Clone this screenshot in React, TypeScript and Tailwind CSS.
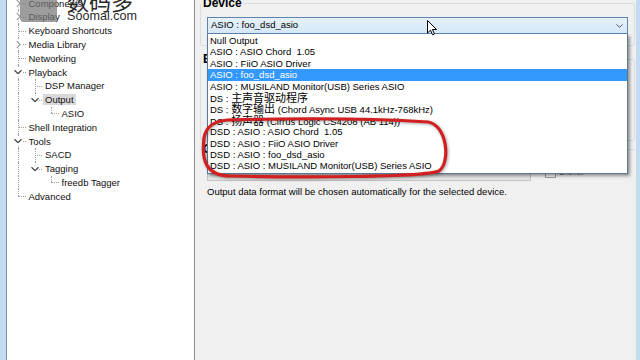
import React from "react";

type TreeNode = {
  label: string;
  level: number;
  exp?: "open" | "closed";
  anc: boolean[];
  last?: boolean;
  sel?: boolean;
};

const tree: TreeNode[] = [
  { label: "Components", level: 0, exp: "closed", anc: [] },
  { label: "Display", level: 0, exp: "closed", anc: [] },
  { label: "Keyboard Shortcuts", level: 0, anc: [] },
  { label: "Media Library", level: 0, exp: "closed", anc: [] },
  { label: "Networking", level: 0, anc: [] },
  { label: "Playback", level: 0, exp: "open", anc: [] },
  { label: "DSP Manager", level: 1, anc: [true] },
  { label: "Output", level: 1, exp: "open", anc: [true], last: true, sel: true },
  { label: "ASIO", level: 2, anc: [true, false], last: true },
  { label: "Shell Integration", level: 0, anc: [] },
  { label: "Tools", level: 0, exp: "open", anc: [] },
  { label: "SACD", level: 1, anc: [true] },
  { label: "Tagging", level: 1, exp: "open", anc: [true], last: true },
  { label: "freedb Tagger", level: 2, anc: [true, false], last: true },
  { label: "Advanced", level: 0, anc: [], last: true },
];

type Item = { pre: string; cjk?: string; post?: string; sel?: boolean };

const devices: Item[] = [
  { pre: "Null Output" },
  { pre: "ASIO : ASIO Chord  1.05" },
  { pre: "ASIO : FiiO ASIO Driver" },
  { pre: "ASIO : foo_dsd_asio", sel: true },
  { pre: "ASIO : MUSILAND Monitor(USB) Series ASIO" },
  { pre: "DS : ", cjk: "主声音驱动程序" },
  { pre: "DS : ", cjk: "数字输出", post: " (Chord Async USB 44.1kHz-768kHz)" },
  { pre: "DS : ", cjk: "扬声器", post: " (Cirrus Logic CS4208 (AB 114))" },
  { pre: "DSD : ASIO : ASIO Chord  1.05" },
  { pre: "DSD : ASIO : FiiO ASIO Driver" },
  { pre: "DSD : ASIO : foo_dsd_asio" },
  { pre: "DSD : ASIO : MUSILAND Monitor(USB) Series ASIO" },
];

const Cell = ({ kind, exp }: { kind: "none" | "pass" | "tee" | "elbow"; exp?: "open" | "closed" }) => (
  <span className="relative h-full w-[16.5px] shrink-0">
    {kind !== "none" && (
      <span
        className={
          "absolute left-[8px] top-0 border-l border-dotted border-[#a0a0a0] " +
          (kind === "elbow" ? "h-1/2" : "bottom-0")
        }
      />
    )}
    {(kind === "tee" || kind === "elbow") && (
      <span className="absolute left-[8px] right-[1px] top-1/2 border-t border-dotted border-[#a0a0a0]" />
    )}
    {exp && (
      <span className="absolute left-[3.5px] top-1/2 -translate-y-1/2 w-[9px] h-[9px] bg-white flex items-center justify-center">
        {exp === "closed" ? (
          <svg width="5" height="8" viewBox="0 0 5 8">
            <polyline points="0.8,0.5 4,4 0.8,7.5" fill="none" stroke="#8c8c8c" strokeWidth="1.1" />
          </svg>
        ) : (
          <svg width="8" height="5" viewBox="0 0 8 5">
            <polyline points="0.5,0.8 4,4.2 7.5,0.8" fill="none" stroke="#404040" strokeWidth="1.2" />
          </svg>
        )}
      </span>
    )}
  </span>
);

const TreeRow = ({ node }: { node: TreeNode }) => (
  <div className="flex h-[13.8px] items-center">
    {node.anc.map((on, i) => (
      <Cell key={i} kind={on ? "pass" : "none"} />
    ))}
    <Cell kind={node.last ? "elbow" : "tee"} exp={node.exp} />
    <span
      className={
        "px-[2px] leading-[11px] whitespace-nowrap text-[#111] " + (node.sel ? "bg-[#d9d9d9]" : "")
      }
    >
      {node.label}
    </span>
  </div>
);

export default function App() {
  return (
    <div className="relative flex w-[640px] h-[360px] overflow-hidden bg-[#f0f0f0] font-['Liberation_Sans','Noto_Sans_CJK_SC',sans-serif] text-[9.5px] text-black">
      {/* window frame, left */}
      <div className="w-[6px] shrink-0 bg-[#c3dbf1]" />

      {/* tree panel */}
      <div className="relative w-[189px] shrink-0 border-x border-[#8a8f96] bg-white pl-[3px]">
        <div className="-mt-[3.8px]">
          {tree.map((n) => (
            <TreeRow key={n.label} node={n} />
          ))}
        </div>

        {/* watermark */}
        <div className="absolute left-[13px] top-0 w-[37px] h-[22px] rounded-b-[4px] bg-[#737373]/70" />
        <div className="absolute left-[60px] -top-[11px] text-[22px] leading-[22px] text-[#2a2a2a] font-['Noto_Sans_CJK_SC',sans-serif]">
          数码多
        </div>
        <div className="absolute left-[60px] top-[10px] text-[12.6px] leading-[13px] text-[#2a2a2a]">
          Soomal.com
        </div>
      </div>

      {/* settings page */}
      <div className="flex-1 flex flex-col pl-[5px] pr-[1px]">
        {/* Device */}
        <fieldset className="-mt-[4px] border border-[#d8dde2] rounded-[3px] px-[6px] pb-[11px]">
          <legend className="-ml-[5px] px-[1px] text-[12px] leading-[14px] font-bold">Device</legend>
          <div className="relative mt-[7px] z-10">
            <div className="flex h-[17px] items-center justify-between border border-[#5b86b0] bg-gradient-to-b from-[#e6f1fb] to-[#d5e8f8] pl-[3px] pr-[4px]">
              <span>ASIO : foo_dsd_asio</span>
              <svg width="7" height="4" viewBox="0 0 7 4">
                <polyline points="0.5,0.5 3.5,3.3 6.5,0.5" fill="none" stroke="#555" strokeWidth="1" />
              </svg>
            </div>

            {/* open list */}
            <div className="absolute left-0 right-0 top-full border border-[#5d7898] border-t-0 bg-white py-[1px] shadow-[2px_2px_3px_rgba(0,0,0,0.4)]">
              {devices.map((d, i) => (
                <div
                  key={i}
                  className={
                    "h-[11.4px] leading-[11.4px] pl-[2px] whitespace-pre " +
                    (d.sel ? "bg-[#3399ff] text-white" : "")
                  }
                >
                  {d.pre}
                  {d.cjk && (
                    <span className="text-[11px] font-['Noto_Sans_CJK_SC',sans-serif]">{d.cjk}</span>
                  )}
                  {d.post}
                </div>
              ))}
            </div>

            {/* mouse pointer */}
            <svg className="absolute left-[220px] top-[3px] z-20" width="11" height="16" viewBox="0 0 11 16">
              <path
                d="M0.5,0.5 V13 L3.5,10.2 L5.6,14.8 L7.5,14 L5.4,9.5 H9.6 Z"
                fill="#fff"
                stroke="#000"
                strokeWidth="1"
                strokeLinejoin="round"
              />
            </svg>
          </div>
        </fieldset>

        {/* Buffer length */}
        <fieldset className="mt-[6px] border border-[#d8dde2] rounded-[3px] px-[6px]">
          <legend className="-ml-[5px] px-[1px] text-[12px] leading-[14px] font-bold">Buffer length</legend>
          <div className="h-[74px]" />
        </fieldset>

        {/* Output format */}
        <fieldset className="mt-[1px] border-t border-[#d8dde2] px-[7px] pb-[5px]">
          <legend className="-ml-[5px] px-[1px] text-[12px] leading-[14px] font-bold">Output format</legend>
          <div className="mt-[7px] flex items-center">
            <div className="h-[18px] w-[324px] border border-[#c4c4c4] bg-[#e6e6e6]" />
            <span className="ml-[14px] w-[11px] h-[11px] border border-[#a0a0a0] bg-[#f6f6f6]" />
            <span className="ml-[3px] text-[#6d6d6d]">Dither</span>
          </div>
          <p className="mt-[5px] leading-[11px]">
            Output data format will be chosen automatically for the selected device.
          </p>
        </fieldset>
      </div>

      {/* window frame, right */}
      <div className="w-[4px] shrink-0 bg-[#c3dbf1]" />

      {/* red annotation drawn over the screenshot */}
      <svg className="absolute inset-0 z-30 pointer-events-none" width="640" height="360" viewBox="0 0 640 360">
        <path
          d="M228 120 C300 118 380 119 428 122 C447 125 451 162 439 171 C423 177.5 300 177.5 230 176 C207 175.5 201 162 204 138 C206 126 214 121 228 120 Z"
          fill="none"
          stroke="#d21f1f"
          strokeWidth="3.2"
          style={{ filter: "drop-shadow(1px 1px 1.5px rgba(0,0,0,0.35))" }}
        />
      </svg>
    </div>
  );
}
